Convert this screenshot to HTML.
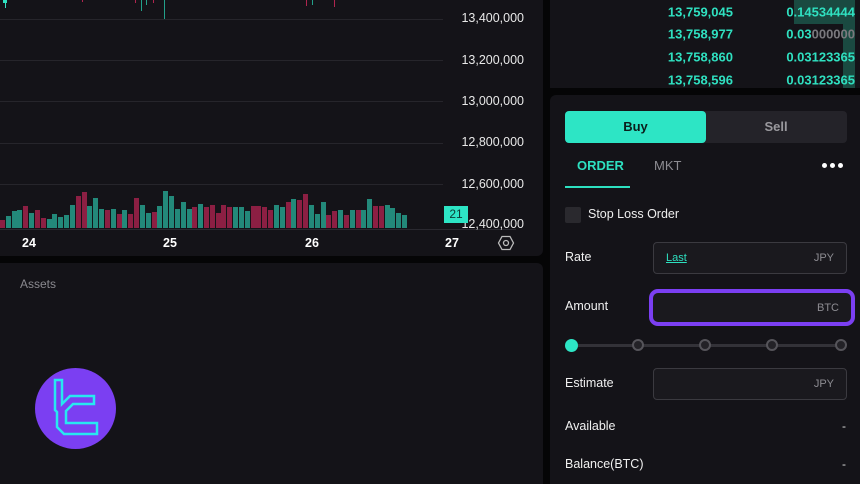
<!DOCTYPE html>
<html><head><meta charset="utf-8"><style>
*{margin:0;padding:0;box-sizing:border-box}
body{width:860px;height:484px;background:#050506;position:relative;overflow:hidden;font-family:"Liberation Sans",sans-serif;color:#e8e8ea}
.p{position:absolute;background:#141318}
.a{position:absolute;white-space:nowrap}
.g{position:absolute;left:0;width:443px;height:1px;background:#26252b}
.pl{position:absolute;right:336px;font-size:12.5px;color:#e8e8e8;transform:translateY(-50%)}
.vol{position:absolute;left:0;top:180px;width:408px;height:48px;display:flex;align-items:flex-end;justify-content:space-between}
.vol i{display:block;width:5px}
.vol .g1{background:#23897a}.vol .r1{background:#8c1f43}
.dl{position:absolute;top:236px;font-size:12.5px;font-weight:bold;color:#fff}
.ob{position:absolute;font-size:13px;font-weight:bold;color:#2fe0c0;transform:translateY(-50%)}
.lab{position:absolute;left:565px;font-size:12.5px;color:#f0f0f0;transform:translateY(-50%)}
.inp{position:absolute;left:653px;width:194px;height:32px;border:1px solid #3b3a40;border-radius:4px;background:#1a191e}
.unit{position:absolute;right:12px;top:50%;transform:translateY(-50%);font-size:11px;color:#8d8c92}
.dot{position:absolute;top:339px;width:12px;height:12px;border-radius:50%;border:2px solid #55545a;background:#232227}
.dd{position:absolute;top:163px;width:5px;height:5px;border-radius:50%;background:#fff}
</style></head><body>
<div class="p" style="left:0;top:0;width:543px;height:256px;border-radius:0 0 6px 0"></div>
<div class="g" style="top:19px"></div><div class="g" style="top:60px"></div><div class="g" style="top:101px"></div><div class="g" style="top:143px"></div><div class="g" style="top:184px"></div>
<div style="position:absolute;left:0;top:229px;width:516px;height:1px;background:#2a2930"></div>
<div class="pl" style="top:18px">13,400,000</div>
<div class="pl" style="top:60px">13,200,000</div>
<div class="pl" style="top:101px">13,000,000</div>
<div class="pl" style="top:142px">12,800,000</div>
<div class="pl" style="top:184px">12,600,000</div>
<div class="pl" style="top:224px">12,400,000</div>
<div style="position:absolute;left:5px;top:0;width:1px;height:8px;background:#2fe0c0"></div>
<div style="position:absolute;left:3px;top:0;width:4px;height:3px;background:#2fe0c0"></div>
<div style="position:absolute;left:82px;top:0;width:1px;height:2px;background:#b0254f"></div>
<div style="position:absolute;left:135px;top:0;width:1px;height:3px;background:#b0254f"></div>
<div style="position:absolute;left:141px;top:0;width:1px;height:11px;background:#23a08a"></div>
<div style="position:absolute;left:146px;top:0;width:1px;height:5px;background:#23a08a"></div>
<div style="position:absolute;left:153px;top:0;width:1px;height:3px;background:#b0254f"></div>
<div style="position:absolute;left:164px;top:0;width:1px;height:19px;background:#23a08a"></div>
<div style="position:absolute;left:306px;top:0;width:1px;height:6px;background:#b0254f"></div>
<div style="position:absolute;left:312px;top:0;width:1px;height:5px;background:#23a08a"></div>
<div style="position:absolute;left:334px;top:0;width:1px;height:7px;background:#b0254f"></div>
<div class="vol">
<i class="r1" style="height:8px"></i><i class="g1" style="height:12px"></i><i class="g1" style="height:17px"></i><i class="g1" style="height:18px"></i><i class="r1" style="height:22px"></i><i class="g1" style="height:15px"></i><i class="r1" style="height:18px"></i><i class="r1" style="height:10px"></i><i class="g1" style="height:9px"></i><i class="g1" style="height:14px"></i><i class="g1" style="height:11px"></i><i class="g1" style="height:13px"></i><i class="g1" style="height:23px"></i><i class="r1" style="height:32px"></i><i class="r1" style="height:36px"></i><i class="g1" style="height:22px"></i><i class="g1" style="height:30px"></i><i class="g1" style="height:19px"></i><i class="r1" style="height:18px"></i><i class="g1" style="height:19px"></i><i class="r1" style="height:14px"></i><i class="g1" style="height:18px"></i><i class="r1" style="height:14px"></i><i class="r1" style="height:30px"></i><i class="g1" style="height:23px"></i><i class="g1" style="height:15px"></i><i class="r1" style="height:16px"></i><i class="g1" style="height:22px"></i><i class="g1" style="height:37px"></i><i class="g1" style="height:32px"></i><i class="g1" style="height:19px"></i><i class="g1" style="height:26px"></i><i class="g1" style="height:19px"></i><i class="r1" style="height:21px"></i><i class="g1" style="height:24px"></i><i class="r1" style="height:21px"></i><i class="r1" style="height:23px"></i><i class="r1" style="height:15px"></i><i class="r1" style="height:23px"></i><i class="r1" style="height:21px"></i><i class="g1" style="height:21px"></i><i class="g1" style="height:21px"></i><i class="g1" style="height:17px"></i><i class="r1" style="height:22px"></i><i class="r1" style="height:22px"></i><i class="r1" style="height:21px"></i><i class="r1" style="height:18px"></i><i class="g1" style="height:23px"></i><i class="g1" style="height:21px"></i><i class="r1" style="height:26px"></i><i class="g1" style="height:29px"></i><i class="r1" style="height:28px"></i><i class="r1" style="height:34px"></i><i class="g1" style="height:23px"></i><i class="g1" style="height:14px"></i><i class="g1" style="height:26px"></i><i class="r1" style="height:13px"></i><i class="r1" style="height:17px"></i><i class="g1" style="height:18px"></i><i class="r1" style="height:13px"></i><i class="g1" style="height:18px"></i><i class="r1" style="height:18px"></i><i class="g1" style="height:18px"></i><i class="g1" style="height:29px"></i><i class="r1" style="height:22px"></i><i class="r1" style="height:22px"></i><i class="g1" style="height:23px"></i><i class="g1" style="height:20px"></i><i class="g1" style="height:15px"></i><i class="g1" style="height:13px"></i>
</div>
<div class="a" style="left:444px;top:206px;width:24px;height:17px;background:#2de5c5;color:#0d3a33;font-size:12px;text-align:center;line-height:17px">21</div>
<div class="dl" style="left:22px">24</div><div class="dl" style="left:163px">25</div><div class="dl" style="left:305px">26</div><div class="dl" style="left:445px">27</div>
<svg style="position:absolute;left:497px;top:235px" width="18" height="16" viewBox="0 0 18 16"><polygon points="5,1.5 13,1.5 16.5,8 13,14.5 5,14.5 1.5,8" fill="none" stroke="#bbb" stroke-width="1.3"/><circle cx="9" cy="8" r="2.5" fill="none" stroke="#bbb" stroke-width="1.3"/></svg>
<div class="p" style="left:0;top:263px;width:543px;height:221px;border-radius:0 6px 0 0"></div>
<div class="a" style="left:20px;top:277px;font-size:12px;color:#8a898f">Assets</div>
<svg style="position:absolute;left:35px;top:368px" width="81" height="81" viewBox="0 0 81 81"><circle cx="40.5" cy="40.5" r="40.5" fill="#7b3ff2"/><path d="M20,12 H27 V36 L35,28 H59 V36 H38 L31,43 V55 H62 V66 H29 L22,59 V44 L20,42 Z" fill="none" stroke="#27e8f0" stroke-width="2.5" stroke-linejoin="miter"/></svg>
<div class="p" style="left:550px;top:0;width:310px;height:88px"></div>
<div style="position:absolute;left:794px;top:0;width:61px;height:24px;background:#1a4a41"></div>
<div style="position:absolute;left:843px;top:24px;width:12px;height:64px;background:#1a4a41"></div>
<div class="ob" style="right:127px;top:12px">13,759,045</div><div class="ob" style="right:5px;top:12px">0.14534444</div>
<div class="ob" style="right:127px;top:34px">13,758,977</div><div class="ob" style="right:5px;top:34px">0.03<span style="color:#7a797e">000000</span></div>
<div class="ob" style="right:127px;top:57px">13,758,860</div><div class="ob" style="right:5px;top:57px">0.03123365</div>
<div class="ob" style="right:127px;top:80px">13,758,596</div><div class="ob" style="right:5px;top:80px">0.03123365</div>
<div class="p" style="left:550px;top:95px;width:310px;height:389px;border-radius:6px 0 0 0"></div>
<div style="position:absolute;left:565px;top:111px;width:282px;height:32px;background:#242329;border-radius:4px"></div>
<div class="a" style="left:565px;top:111px;width:141px;height:32px;background:#2de5c5;border-radius:4px;color:#0b1f1c;font-size:13px;font-weight:bold;text-align:center;line-height:32px">Buy</div>
<div class="a" style="left:706px;top:111px;width:140px;height:32px;color:#9a999e;font-size:13px;font-weight:bold;text-align:center;line-height:32px">Sell</div>
<div class="a" style="left:577px;top:158px;font-size:13px;font-weight:bold;color:#2de0c0">ORDER</div>
<div style="position:absolute;left:565px;top:186px;width:65px;height:2px;background:#2de0c0"></div>
<div class="a" style="left:654px;top:158px;font-size:13px;color:#8d8c92">MKT</div>
<div class="dd" style="left:822px"></div><div class="dd" style="left:830px"></div><div class="dd" style="left:838px"></div>
<div style="position:absolute;left:565px;top:207px;width:16px;height:16px;background:#2a292e;border-radius:2px"></div>
<div class="a" style="left:588px;top:207px;font-size:12.5px;color:#eee">Stop Loss Order</div>
<div class="lab" style="top:257px">Rate</div>
<div class="inp" style="top:242px"><span style="position:absolute;left:12px;top:50%;transform:translateY(-50%);font-size:11px;color:#2de0c0;text-decoration:underline">Last</span><span class="unit">JPY</span></div>
<div class="lab" style="top:306px">Amount</div>
<div class="inp" style="left:649px;top:289px;width:206px;height:37px;border:4px solid #7b3ff2;border-radius:9px"><span class="unit">BTC</span></div>
<div style="position:absolute;left:571px;top:344px;width:271px;height:3px;background:#333238"></div>
<div style="position:absolute;left:565px;top:339px;width:13px;height:13px;border-radius:50%;background:#2de5c5"></div>
<div class="dot" style="left:632px"></div><div class="dot" style="left:699px"></div><div class="dot" style="left:766px"></div><div class="dot" style="left:835px"></div>
<div class="lab" style="top:383px">Estimate</div>
<div class="inp" style="top:368px"><span class="unit">JPY</span></div>
<div class="lab" style="top:426px">Available</div><div class="a" style="left:842px;top:419px;font-size:12px;color:#ddd">-</div>
<div class="lab" style="top:464px">Balance(BTC)</div><div class="a" style="left:842px;top:457px;font-size:12px;color:#ddd">-</div>
</body></html>
